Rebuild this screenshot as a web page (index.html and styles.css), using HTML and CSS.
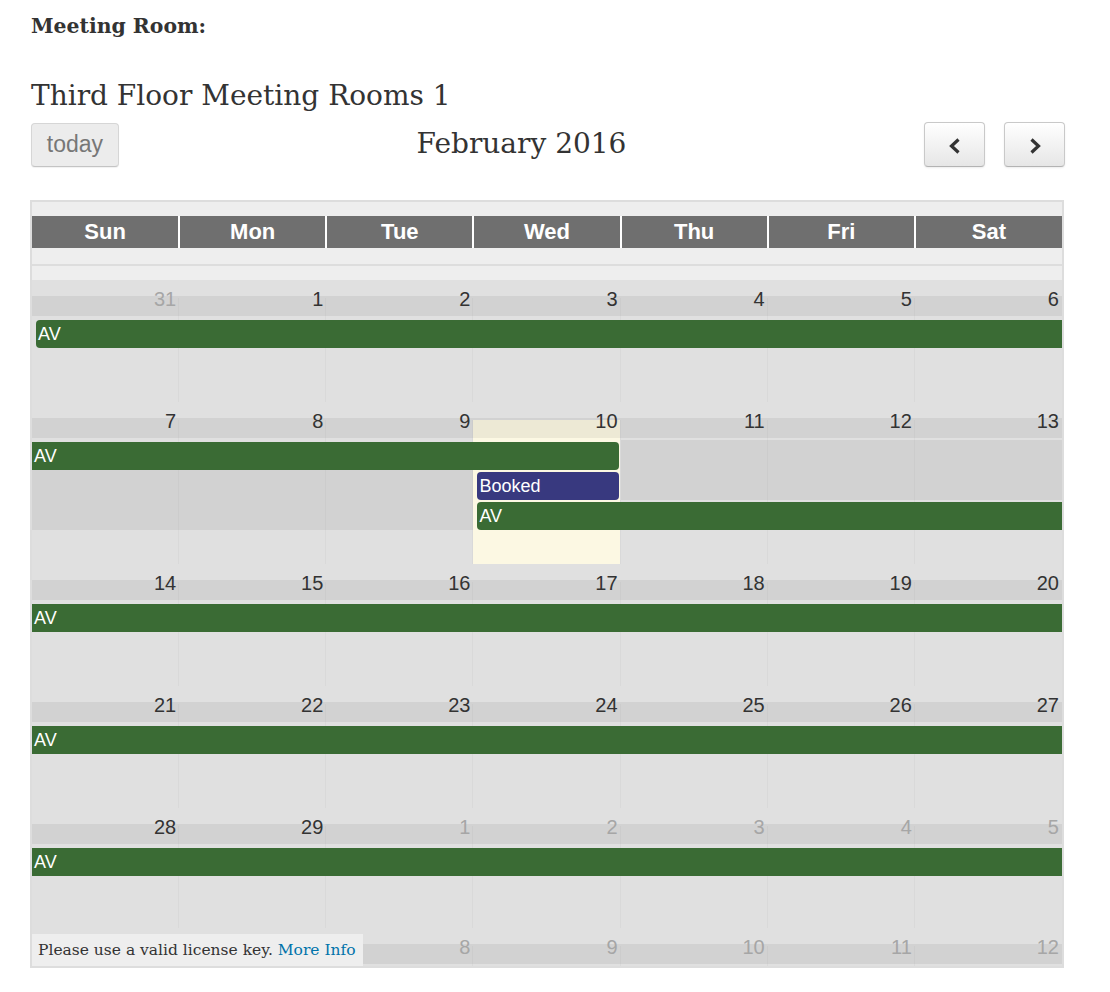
FILE: index.html
```html
<!DOCTYPE html>
<html>
<head>
<meta charset="utf-8">
<title>Meeting Room</title>
<link rel="stylesheet" href="styles.css">
</head>
<body>
<div class="page">
  <p class="label">Meeting Room:</p>
  <h2 class="room">Third Floor Meeting Rooms 1</h2>
  <div class="toolbar">
    <div class="tb-left"><button class="btn btn-today" disabled>today</button></div>
    <div class="tb-center"><h2 class="month">February 2016</h2></div>
    <div class="tb-right">
      <button class="btn btn-nav" aria-label="prev"><svg class="chev" viewBox="0 0 14 16" width="14" height="16"><polyline points="10.5,1.5 3.5,8 10.5,14.5"/></svg></button>
      <button class="btn btn-nav" aria-label="next"><svg class="chev" viewBox="0 0 14 16" width="14" height="16"><polyline points="3.5,1.5 10.5,8 3.5,14.5"/></svg></button>
    </div>
  </div>

  <div class="cal">
    <div class="dow-row">
      <div class="dow">Sun</div><div class="dow">Mon</div><div class="dow">Tue</div><div class="dow">Wed</div><div class="dow">Thu</div><div class="dow">Fri</div><div class="dow">Sat</div>
    </div>
    <div class="cal-sep"></div>

    <!-- week 1 -->
    <div class="week">
      <div class="bg c1"></div><div class="bg c2"></div><div class="bg c3"></div><div class="bg c4"></div><div class="bg c5"></div><div class="bg c6"></div><div class="bg c7"></div>
      <div class="band"></div>
      <div class="num c1 other">31</div><div class="num c2">1</div><div class="num c3">2</div><div class="num c4">3</div><div class="num c5">4</div><div class="num c6">5</div><div class="num c7">6</div>
      <div class="ev green r1 c1 sp7 start">AV</div>
    </div>

    <!-- week 2 -->
    <div class="week tall">
      <div class="bg c1"></div><div class="bg c2"></div><div class="bg c3"></div><div class="bg c4 today"></div><div class="bg c5"></div><div class="bg c6"></div><div class="bg c7"></div>
      <div class="band"></div>
      <div class="num c1">7</div><div class="num c2">8</div><div class="num c3">9</div><div class="num c4">10</div><div class="num c5">11</div><div class="num c6">12</div><div class="num c7">13</div>
      <div class="fill r1 c5 sp3"></div>
      <div class="fill r2 c1 sp3"></div>
      <div class="fill r2 c5 sp3"></div>
      <div class="fill r3 c1 sp3"></div>
      <div class="ev green r1 c1 sp4 end">AV</div>
      <div class="ev blue r2 c4 sp1 start end">Booked</div>
      <div class="ev green r3 c4 sp4 start">AV</div>
    </div>

    <!-- week 3 -->
    <div class="week">
      <div class="bg c1"></div><div class="bg c2"></div><div class="bg c3"></div><div class="bg c4"></div><div class="bg c5"></div><div class="bg c6"></div><div class="bg c7"></div>
      <div class="band"></div>
      <div class="num c1">14</div><div class="num c2">15</div><div class="num c3">16</div><div class="num c4">17</div><div class="num c5">18</div><div class="num c6">19</div><div class="num c7">20</div>
      <div class="ev green r1 c1 sp7">AV</div>
    </div>

    <!-- week 4 -->
    <div class="week">
      <div class="bg c1"></div><div class="bg c2"></div><div class="bg c3"></div><div class="bg c4"></div><div class="bg c5"></div><div class="bg c6"></div><div class="bg c7"></div>
      <div class="band"></div>
      <div class="num c1">21</div><div class="num c2">22</div><div class="num c3">23</div><div class="num c4">24</div><div class="num c5">25</div><div class="num c6">26</div><div class="num c7">27</div>
      <div class="ev green r1 c1 sp7">AV</div>
    </div>

    <!-- week 5 -->
    <div class="week short">
      <div class="bg c1"></div><div class="bg c2"></div><div class="bg c3"></div><div class="bg c4"></div><div class="bg c5"></div><div class="bg c6"></div><div class="bg c7"></div>
      <div class="band"></div>
      <div class="num c1">28</div><div class="num c2">29</div><div class="num c3 other">1</div><div class="num c4 other">2</div><div class="num c5 other">3</div><div class="num c6 other">4</div><div class="num c7 other">5</div>
      <div class="ev green r1 c1 sp7">AV</div>
    </div>

    <!-- week 6 (partly hidden under the license note) -->
    <div class="week">
      <div class="bg c1"></div><div class="bg c2"></div><div class="bg c3"></div><div class="bg c4"></div><div class="bg c5"></div><div class="bg c6"></div><div class="bg c7"></div>
      <div class="band"></div>
      <div class="num c3 other">8</div><div class="num c4 other">9</div><div class="num c5 other">10</div><div class="num c6 other">11</div><div class="num c7 other">12</div>
    </div>

    <div class="license">Please use a valid license key. <a href="#">More Info</a></div>
  </div>
</div>
</body>
</html>
```

FILE: styles.css
```css
html, body {
  margin: 0;
  padding: 0;
  background: #fff;
}

body {
  font-family: "DejaVu Serif", "Liberation Serif", serif;
  color: #333;
}

.page {
  width: 1035px;
  padding-left: 30px;
}

.label {
  margin: 14px 0 0 1px;
  font-size: 20.4px;
  line-height: 24px;
  font-weight: bold;
}

.room {
  margin: 40px 0 0 1px;
  font-size: 28px;
  line-height: 36px;
  font-weight: normal;
}

.toolbar {
  margin-top: 8px;
  height: 45px;
  display: flex;
  align-items: center;
}

.tb-left {
  display: flex;
  padding-left: 1px;
}

.tb-center {
  flex: 1;
  text-align: center;
}

.month {
  margin: 0 0 2px 0;
  font-size: 28px;
  line-height: 36px;
  font-weight: normal;
}

.tb-right {
  display: flex;
  gap: 19px;
}

.btn {
  box-sizing: border-box;
  height: 45px;
  padding: 0;
  border-radius: 4px;
  border: 1px solid #c9c9c9;
  border-bottom-color: #b3b3b3;
  background: linear-gradient(#ffffff, #e6e6e6);
  box-shadow: inset 0 1px 0 rgba(255, 255, 255, 0.3), 0 1px 2px rgba(0, 0, 0, 0.08);
  display: flex;
  align-items: center;
  justify-content: center;
}

.btn-nav {
  width: 61px;
}

.chev {
  display: block;
  margin-top: 2px;
}

.chev polyline {
  fill: none;
  stroke: #333;
  stroke-width: 3.2;
  stroke-linejoin: miter;
}

.btn-today {
  width: 88px;
  height: 44px;
  font-family: "Liberation Sans", Arial, sans-serif;
  font-size: 23px;
  color: #777;
  background: #ececec;
  border-color: #d6d6d6;
  border-bottom-color: #c4c4c4;
  box-shadow: 0 1px 1px rgba(0, 0, 0, 0.06);
}

/* calendar */
.cal {
  position: relative;
  box-sizing: border-box;
  width: 1034px;
  height: 768px;
  margin-top: 33px;
  padding-top: 14px;
  border: 2px solid #dddddd;
  background: #eeeeee;
  overflow: hidden;
  font-family: "Liberation Sans", Arial, sans-serif;
}

.dow-row {
  display: grid;
  grid-template-columns: repeat(7, 1fr);
  height: 32px;
}

.dow {
  box-sizing: border-box;
  background: #6f6f6f;
  color: #fff;
  font-weight: bold;
  font-size: 22px;
  line-height: 32px;
  text-align: center;
  border-left: 1px solid #fff;
  border-right: 1px solid #fff;
}

.dow:first-child {
  border-left: none;
}

.dow:last-child {
  border-right: none;
}

.cal-sep {
  height: 16px;
  border-bottom: 2px solid #dddddd;
  margin-bottom: 14px;
}

.week {
  display: grid;
  grid-template-columns: repeat(7, 1fr);
  grid-template-rows: 16px 2px 18px 2px 30px 1fr;
  height: 122px;
  background: #e0e0e0;
}

.week.tall {
  grid-template-rows: 16px 2px 18px 2px 30px 30px 30px 1fr;
  height: 162px;
}

.week.short {
  height: 120px;
}

.c1 { grid-column-start: 1; }
.c2 { grid-column-start: 2; }
.c3 { grid-column-start: 3; }
.c4 { grid-column-start: 4; }
.c5 { grid-column-start: 5; }
.c6 { grid-column-start: 6; }
.c7 { grid-column-start: 7; }

.sp1 { grid-column-end: span 1; }
.sp3 { grid-column-end: span 3; }
.sp4 { grid-column-end: span 4; }
.sp7 { grid-column-end: span 7; }

.r1 { grid-row: 5; }
.r2 { grid-row: 6; }
.r3 { grid-row: 7; }

.bg {
  grid-row: 3 / -1;
  box-sizing: border-box;
  background: #e0e0e0;
  border-right: 1px solid #d9d9d9;
}

.bg.c7 {
  border-right: none;
}

.bg.today {
  background: #fcf8e3;
}

.band {
  grid-row: 2 / 4;
  grid-column: 1 / -1;
  background: rgba(0, 0, 0, 0.06);
}

.num {
  grid-row: 1 / 4;
  padding: 7px 3px 0 0;
  font-size: 20px;
  line-height: 24px;
  text-align: right;
  color: #333;
}

.num.other {
  color: #a6a6a6;
}

.fill {
  background: rgba(0, 0, 0, 0.06);
}

.ev {
  margin-top: 2px;
  height: 28px;
  line-height: 28px;
  padding: 0 2px;
  font-size: 18px;
  color: #fff;
  white-space: nowrap;
  overflow: hidden;
}

.ev.green {
  background: #3a6b34;
}

.ev.blue {
  background: #38397f;
}

.ev.start {
  margin-left: 4px;
  border-top-left-radius: 4px;
  border-bottom-left-radius: 4px;
}

.ev.end {
  margin-right: 2px;
  border-top-right-radius: 4px;
  border-bottom-right-radius: 4px;
}

.license {
  position: absolute;
  left: 0;
  bottom: 0;
  height: 32px;
  line-height: 32px;
  padding: 0 7px 0 6px;
  background: #eeeeee;
  font-family: "DejaVu Serif", "Liberation Serif", serif;
  font-size: 15.5px;
  color: #333;
  white-space: nowrap;
}

.license a {
  color: #0073aa;
  text-decoration: none;
}
```
